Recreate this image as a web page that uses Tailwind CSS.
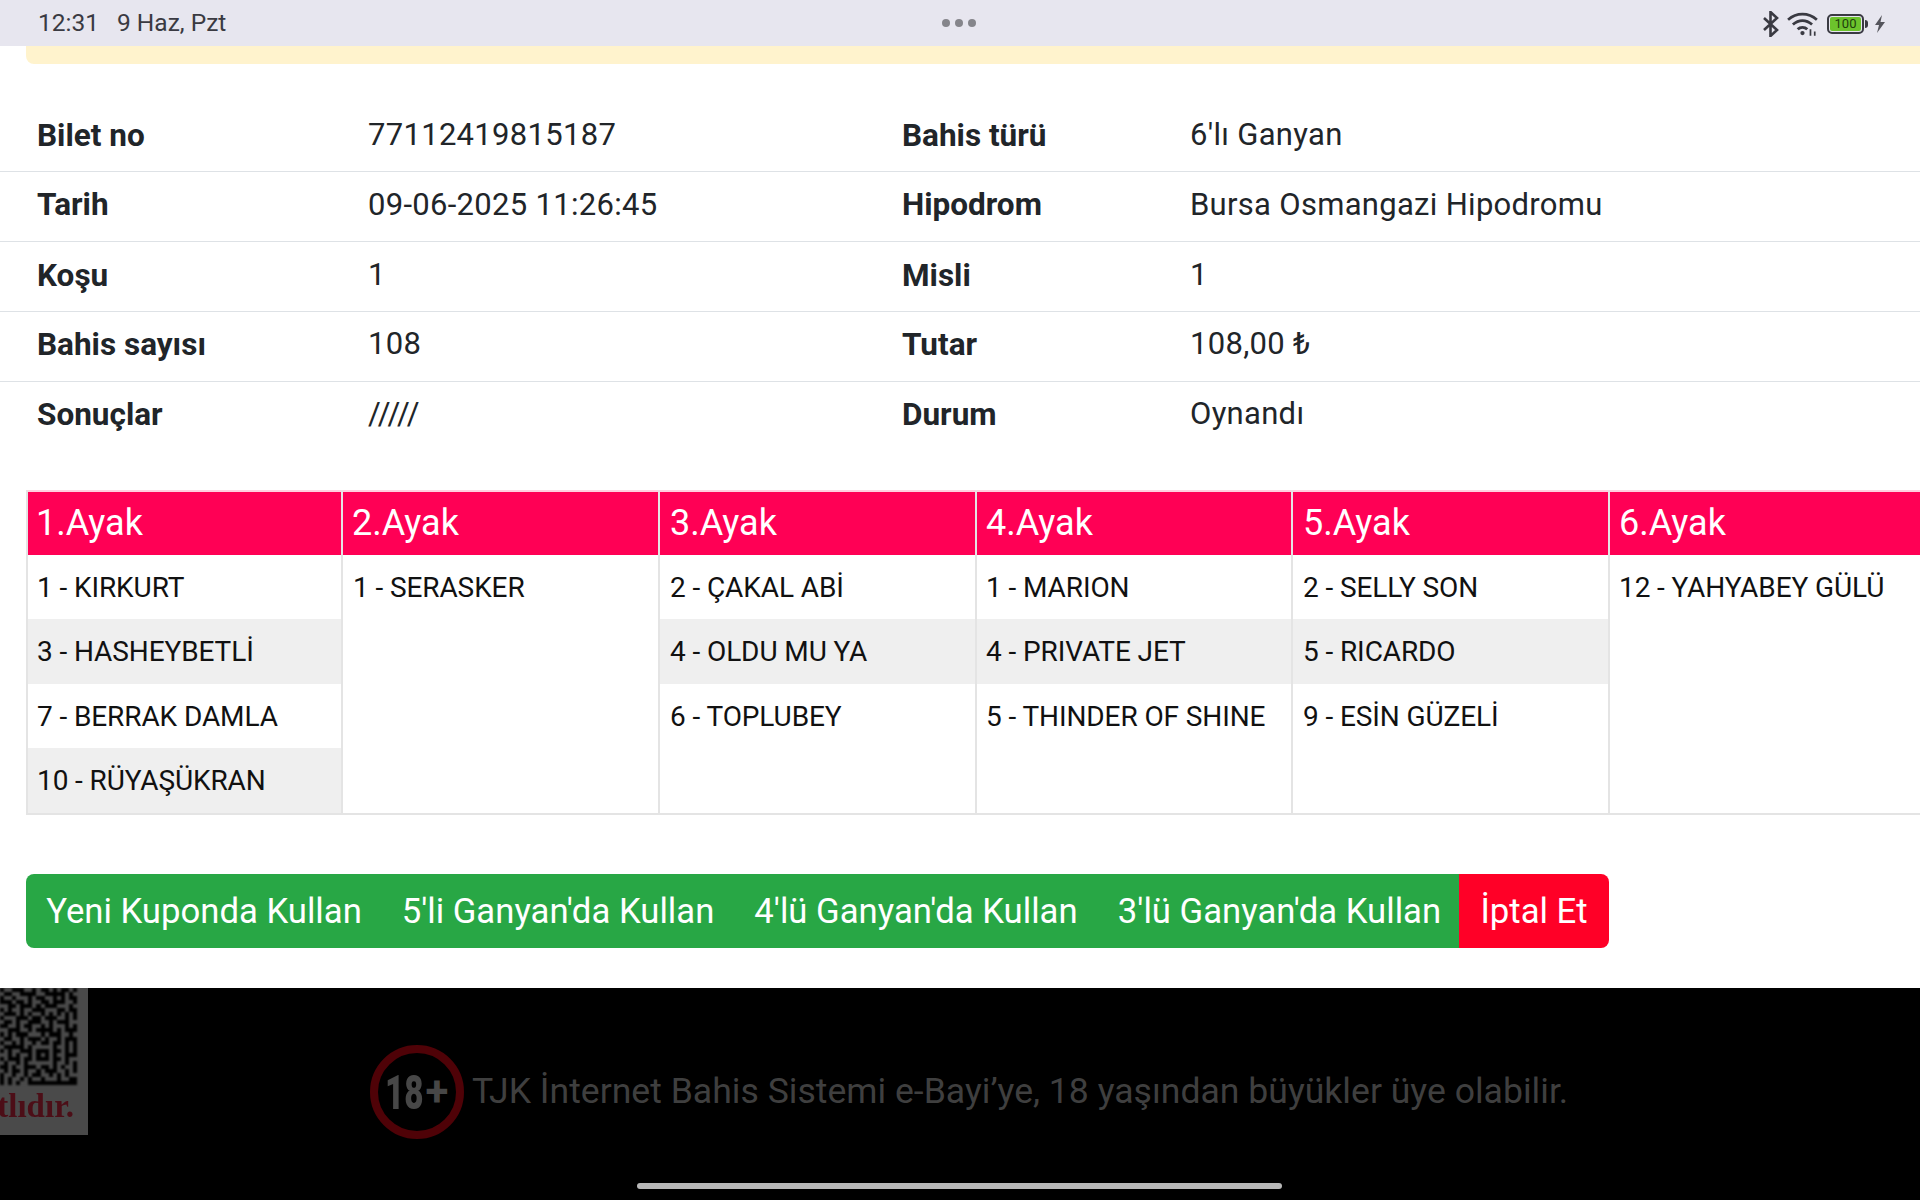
<!DOCTYPE html>
<html lang="tr">
<head>
  <meta charset="UTF-8" />
  <title>Bilet</title>
  <script src="https://cdn.jsdelivr.net/npm/@tailwindcss/browser@4"></script>
</head>
<body class="w-[1920px] h-[1200px] overflow-hidden bg-white font-['Roboto',sans-serif] relative">

  <!-- status bar -->
  <div class="h-[46px] bg-[#e7e6ef] flex items-center justify-between pl-[38px] pr-[34px] text-[#3a3a42] text-[24.500px] pt-[1px]">
    <div class="flex gap-[18px] w-[400px]"><span>12:31</span><span>9 Haz, Pzt</span></div>
    <div class="flex gap-[5px] mr-[6px] mb-[2px]">
      <span class="w-[8px] h-[8px] rounded-full bg-[#85858b]"></span>
      <span class="w-[8px] h-[8px] rounded-full bg-[#85858b]"></span>
      <span class="w-[8px] h-[8px] rounded-full bg-[#85858b]"></span>
    </div>
    <div class="flex items-center justify-end gap-[6px] w-[400px]">
      <svg class="mr-[2px]" width="16" height="26" viewBox="0 0 16 26" fill="none" stroke="#3a3a42" stroke-width="2.6"><path d="M1 7l13 12-6.500 6V1L14 7 1 19"/></svg>
      <svg width="32" height="26" viewBox="0 0 30 24" fill="none" stroke="#3a3a42" stroke-width="2.6"><path d="M1 8c8-7 19-7 27 0M5.500 12.500c5.500-5 12.500-5 18 0M10 17c2.500-2.500 6.500-2.500 9 0"/><circle cx="14.500" cy="20.500" r="2" fill="#3a3a42" stroke="none"/><path d="M22 17v6M26 19v4" stroke-width="1.600"/></svg>
      <div class="flex items-center ml-[2px]">
        <div class="w-[37px] h-[20px] rounded-[5px] border-2 border-[#3a3a42] p-[1px]">
          <div class="h-full rounded-[2px] bg-[#6cc32c] text-[13px] leading-[14px] text-center text-[#20400c]">100</div>
        </div>
        <div class="w-[3px] h-[8px] bg-[#3a3a42] ml-[1px] rounded-r-sm"></div>
      </div>
      <svg width="12" height="18" viewBox="0 0 12 18" fill="#55555c"><path d="M8 0L1 10h4l-2 8 8-11H6.500z"/></svg>
    </div>
  </div>

  <!-- alert remnant -->
  <div class="ml-[26px] h-[18px] bg-[#fff3cd] rounded-bl-[8px]"></div>

  <!-- bilet details -->
  <div class="mt-[38px] w-[1920px] text-[31px] text-[#212529] tracking-[0.3px]">
    <div class="grid grid-cols-[331px_534px_288px_1fr] pl-[37px] h-[70px] pb-[2px] items-center border-b border-[#dee2e6]">
      <b class="font-bold tracking-normal text-[31.500px]">Bilet no</b><span>77112419815187</span><b class="font-bold tracking-normal text-[31.500px]">Bahis türü</b><span>6'lı Ganyan</span>
    </div>
    <div class="grid grid-cols-[331px_534px_288px_1fr] pl-[37px] h-[70px] pb-[3px] items-center border-b border-[#dee2e6]">
      <b class="font-bold tracking-normal text-[31.500px]">Tarih</b><span>09-06-2025 11:26:45</span><b class="font-bold tracking-normal text-[31.500px]">Hipodrom</b><span>Bursa Osmangazi Hipodromu</span>
    </div>
    <div class="grid grid-cols-[331px_534px_288px_1fr] pl-[37px] h-[70px] pb-[2px] items-center border-b border-[#dee2e6]">
      <b class="font-bold tracking-normal text-[31.500px]">Koşu</b><span>1</span><b class="font-bold tracking-normal text-[31.500px]">Misli</b><span>1</span>
    </div>
    <div class="grid grid-cols-[331px_534px_288px_1fr] pl-[37px] h-[70px] pb-[4px] items-center border-b border-[#dee2e6]">
      <b class="font-bold tracking-normal text-[31.500px]">Bahis sayısı</b><span>108</span><b class="font-bold tracking-normal text-[31.500px]">Tutar</b><span>108,00 ₺</span>
    </div>
    <div class="grid grid-cols-[331px_534px_288px_1fr] pl-[37px] h-[70px] pb-[5px] items-center">
      <b class="font-bold tracking-normal text-[31.500px]">Sonuçlar</b><span>/////</span><b class="font-bold tracking-normal text-[31.500px]">Durum</b><span>Oynandı</span>
    </div>
  </div>

  <!-- ayaklar -->
  <div class="mt-[38px] ml-[26px] flex w-[1920px] h-[325px] text-[28px] tracking-[-0.1px] text-[#111] border-b-2 border-[#e4e4e4]">
    <div class="w-[315px] shrink-0 border-l-2 border-[#e4e4e4]">
      <div class="h-[65px] bg-[#ff0055] text-white text-[36px] tracking-normal leading-[62px] pl-[8px] border-t-2 border-[#ffd0df]">1.Ayak</div>
      <div class="h-[64px] flex items-center pl-[9px] pt-[1px]">1 - KIRKURT</div>
      <div class="h-[65px] flex items-center pl-[9px] bg-[#efefef]">3 - HASHEYBETLİ</div>
      <div class="h-[64px] flex items-center pl-[9px] pt-[1px]">7 - BERRAK DAMLA</div>
      <div class="h-[65px] flex items-center pl-[9px] bg-[#efefef]">10 - RÜYAŞÜKRAN</div>
    </div>
    <div class="w-[317px] shrink-0 border-l-2 border-[#e4e4e4]">
      <div class="h-[65px] bg-[#ff0055] text-white text-[36px] tracking-normal leading-[62px] pl-[9px] border-t-2 border-[#ffd0df]">2.Ayak</div>
      <div class="h-[64px] flex items-center pl-[10px] pt-[1px]">1 - SERASKER</div>
    </div>
    <div class="w-[317px] shrink-0 border-l-2 border-[#e4e4e4]">
      <div class="h-[65px] bg-[#ff0055] text-white text-[36px] tracking-normal leading-[62px] pl-[10px] border-t-2 border-[#ffd0df]">3.Ayak</div>
      <div class="h-[64px] flex items-center pl-[10px] pt-[1px]">2 - ÇAKAL ABİ</div>
      <div class="h-[65px] flex items-center pl-[10px] bg-[#efefef]">4 - OLDU MU YA</div>
      <div class="h-[64px] flex items-center pl-[10px] pt-[1px]">6 - TOPLUBEY</div>
    </div>
    <div class="w-[316px] shrink-0 border-l-2 border-[#e4e4e4]">
      <div class="h-[65px] bg-[#ff0055] text-white text-[36px] tracking-normal leading-[62px] pl-[9px] border-t-2 border-[#ffd0df]">4.Ayak</div>
      <div class="h-[64px] flex items-center pl-[9px] pt-[1px]">1 - MARION</div>
      <div class="h-[65px] flex items-center pl-[9px] bg-[#efefef]">4 - PRIVATE JET</div>
      <div class="h-[64px] flex items-center pl-[9px] pt-[1px]">5 - THINDER OF SHINE</div>
    </div>
    <div class="w-[317px] shrink-0 border-l-2 border-[#e4e4e4]">
      <div class="h-[65px] bg-[#ff0055] text-white text-[36px] tracking-normal leading-[62px] pl-[10px] border-t-2 border-[#ffd0df]">5.Ayak</div>
      <div class="h-[64px] flex items-center pl-[10px] pt-[1px]">2 - SELLY SON</div>
      <div class="h-[65px] flex items-center pl-[10px] bg-[#efefef]">5 - RICARDO</div>
      <div class="h-[64px] flex items-center pl-[10px] pt-[1px]">9 - ESİN GÜZELİ</div>
    </div>
    <div class="w-[317px] shrink-0 border-l-2 border-[#e4e4e4]">
      <div class="h-[65px] bg-[#ff0055] text-white text-[36px] tracking-normal leading-[62px] pl-[9px] border-t-2 border-[#ffd0df]">6.Ayak</div>
      <div class="h-[64px] flex items-center pl-[9px] pt-[1px]">12 - YAHYABEY GÜLÜ</div>
    </div>
  </div>

  <!-- butonlar -->
  <div class="mt-[59px] ml-[26px] flex w-[1583px] h-[74px] text-[34.700px] text-white rounded-[8px] overflow-hidden">
    <div class="w-[356px] bg-[#28a745] flex items-center justify-center pt-[1px]">Yeni Kuponda Kullan</div>
    <div class="w-[352px] bg-[#28a745] flex items-center justify-center pt-[1px]">5'li Ganyan'da Kullan</div>
    <div class="w-[364px] bg-[#28a745] flex items-center justify-center pt-[1px]">4'lü Ganyan'da Kullan</div>
    <div class="w-[361px] bg-[#28a745] flex items-center justify-center pt-[1px] pl-[2px] whitespace-nowrap">3'lü Ganyan'da Kullan</div>
    <div class="w-[150px] bg-[#ff0027] flex items-center justify-center pt-[1px]">İptal Et</div>
  </div>

  <!-- footer -->
  <div class="absolute left-0 right-0 top-[988px] h-[212px] bg-black">
    <div class="absolute left-0 top-0 w-[88px] h-[147px] bg-[#4a4a4a] overflow-hidden">
      <svg class="absolute left-0 top-0 blur-[0.8px]" width="77" height="97" viewBox="0 0 19 24" shape-rendering="crispEdges"><rect width="19" height="24" fill="#000"/><path id="qr" fill="#4a4a4a" d=""/></svg>
      <div class="absolute left-0 top-[98px] w-[77px] h-[40px] overflow-hidden">
        <span class="absolute right-[3px] top-[0px] text-[33px] leading-[40px] font-bold text-[#4c0e17] font-['Liberation_Serif',serif] whitespace-nowrap blur-[0.4px]">tlıdır.</span>
      </div>
    </div>

    <div class="absolute left-[370px] top-[57px] w-[94px] h-[94px] rounded-full border-[8px] border-[#4f0207] flex items-center justify-center text-[#474747] font-['Roboto',sans-serif]">
      <span class="inline-block w-[56px] -mx-[9px] text-[49px] leading-none font-black scale-x-[0.68] text-center origin-center">18</span>
      <span class="inline-block w-[24px] ml-[2px] text-[42px] leading-none font-bold text-center">+</span>
    </div>
    <div class="absolute left-[472px] top-[80px] text-[35.600px] leading-[46px] text-[#3f3f3f] whitespace-nowrap">TJK İnternet Bahis Sistemi e-Bayi’ye, 18 yaşından büyükler üye olabilir.</div>
    <div class="absolute left-[637px] top-[195px] w-[645px] h-[6px] rounded-full bg-[#b8b8b8]"></div>
  </div>

  <script>
    // qr kodun gorunen parcasi
    const rows = [
      '.##...##.#..#.#..#.',
      '#..##....##.....#.#',
      '.##.###.#..##.#.#..',
      '...#..#.##..#...##.',
      '##..#...#.#...###.#',
      '.#.##.##...###..#..',
      '#...#.#.##.#.#.#.#.',
      '.###...#..#...##.#.',
      '#..#.##...##.#...##',
      '..##.#..##.#.###.#.',
      '##...##.#....#.#...',
      '.#.#...###.#...##.#',
      '#..##.#...#.##.#...',
      '.##.#.##.#..#..#.#.',
      '#.....#.#####.##.#.',
      '.#.##...#...#..#.#.',
      '##.#.##.#.#.#.##...',
      '.#...#..#...#..#.##',
      '#.##.#.######.##.#.',
      '..#.##...#..#.#.##.',
      '#.#..#.##.#...##.#.',
      '.##.##.#..##.#.#.##',
      '.#.##.#.##.###.##..',
      '.#.#.##...........'
    ];
    let d = '';
    rows.forEach((r, y) => [...r].forEach((c, x) => { if (c === '#') d += `M${x} ${y}h1v1h-1z`; }));
    document.getElementById('qr').setAttribute('d', d);
  </script>
</body>
</html>
